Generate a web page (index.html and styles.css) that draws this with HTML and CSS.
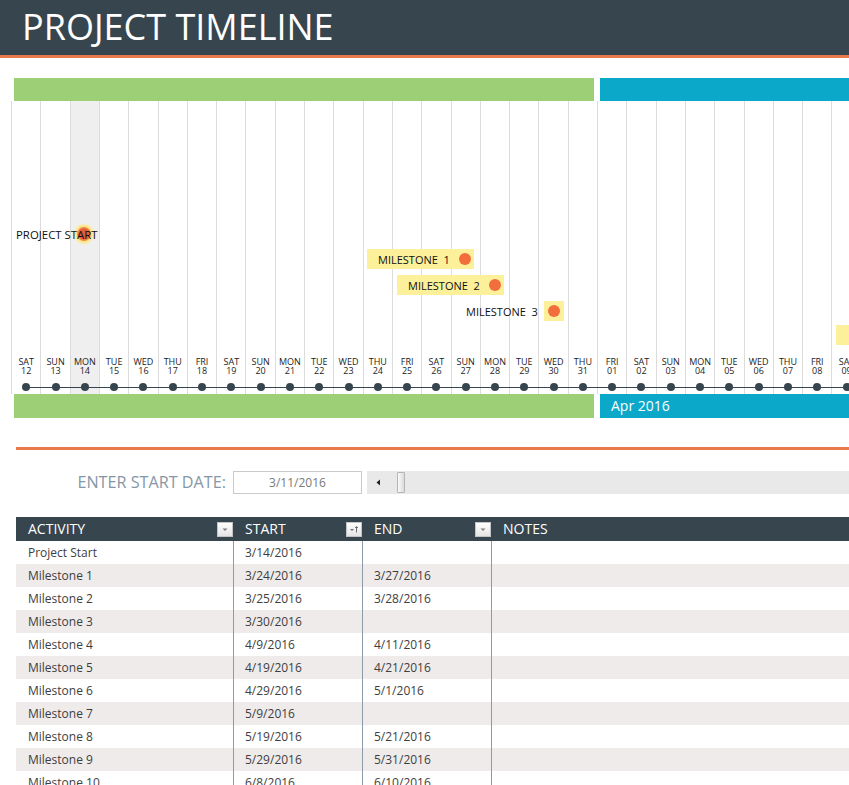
FILE: index.html
```html
<!DOCTYPE html>
<html lang="en">
<head>
<meta charset="utf-8">
<title>Project Timeline</title>
<link rel="stylesheet" href="styles.css">
</head>
<body>
<header class="title-bar"><h1 class="title">PROJECT TIMELINE</h1></header>

<section class="timeline">
  <div class="band band-top">
    <div class="seg seg-mar"></div>
    <div class="seg seg-apr"></div>
  </div>

  <div class="chart">
    <div class="days">
      <div class="day"><span class="dlabel">SAT<br>12</span><span class="dot"></span></div>
      <div class="day"><span class="dlabel">SUN<br>13</span><span class="dot"></span></div>
      <div class="day today"><span class="dlabel">MON<br>14</span><span class="dot"></span></div>
      <div class="day"><span class="dlabel">TUE<br>15</span><span class="dot"></span></div>
      <div class="day"><span class="dlabel">WED<br>16</span><span class="dot"></span></div>
      <div class="day"><span class="dlabel">THU<br>17</span><span class="dot"></span></div>
      <div class="day"><span class="dlabel">FRI<br>18</span><span class="dot"></span></div>
      <div class="day"><span class="dlabel">SAT<br>19</span><span class="dot"></span></div>
      <div class="day"><span class="dlabel">SUN<br>20</span><span class="dot"></span></div>
      <div class="day"><span class="dlabel">MON<br>21</span><span class="dot"></span></div>
      <div class="day"><span class="dlabel">TUE<br>22</span><span class="dot"></span></div>
      <div class="day"><span class="dlabel">WED<br>23</span><span class="dot"></span></div>
      <div class="day"><span class="dlabel">THU<br>24</span><span class="dot"></span></div>
      <div class="day"><span class="dlabel">FRI<br>25</span><span class="dot"></span></div>
      <div class="day"><span class="dlabel">SAT<br>26</span><span class="dot"></span></div>
      <div class="day"><span class="dlabel">SUN<br>27</span><span class="dot"></span></div>
      <div class="day"><span class="dlabel">MON<br>28</span><span class="dot"></span></div>
      <div class="day"><span class="dlabel">TUE<br>29</span><span class="dot"></span></div>
      <div class="day"><span class="dlabel">WED<br>30</span><span class="dot"></span></div>
      <div class="day"><span class="dlabel">THU<br>31</span><span class="dot"></span></div>
      <div class="day"><span class="dlabel">FRI<br>01</span><span class="dot"></span></div>
      <div class="day"><span class="dlabel">SAT<br>02</span><span class="dot"></span></div>
      <div class="day"><span class="dlabel">SUN<br>03</span><span class="dot"></span></div>
      <div class="day"><span class="dlabel">MON<br>04</span><span class="dot"></span></div>
      <div class="day"><span class="dlabel">TUE<br>05</span><span class="dot"></span></div>
      <div class="day"><span class="dlabel">WED<br>06</span><span class="dot"></span></div>
      <div class="day"><span class="dlabel">THU<br>07</span><span class="dot"></span></div>
      <div class="day"><span class="dlabel">FRI<br>08</span><span class="dot"></span></div>
      <div class="day"><span class="dlabel">SAT<br>09</span><span class="dot"></span></div>
    </div>

    <div class="marker m-start"><span class="halo"></span><span class="mlabel">PROJECT START</span></div>
    <div class="marker mbox m1"><span class="mlabel">MILESTONE  1</span><span class="mdot"></span></div>
    <div class="marker mbox m2"><span class="mlabel">MILESTONE  2</span><span class="mdot"></span></div>
    <div class="marker m3"><span class="mlabel">MILESTONE  3</span><span class="dotbox"><span class="mdot"></span></span></div>
    <div class="marker m4"></div>
  </div>

  <div class="band band-bottom">
    <div class="seg seg-mar"></div>
    <div class="seg seg-apr">Apr 2016</div>
  </div>
</section>

<div class="divider"></div>

<div class="start-row">
  <label class="start-label" for="start-date">ENTER START DATE:</label>
  <div class="date-input" id="start-date">3/11/2016</div>
  <div class="scrollbar">
    <svg class="sb-arrow" width="5" height="7" viewBox="0 0 5 7"><path d="M4 0.5 L0.5 3.5 L4 6.5 Z" fill="#222"/></svg>
    <span class="sb-thumb"></span>
  </div>
</div>

<div class="table">
  <div class="trow thead">
    <div class="cell">ACTIVITY<span class="fbtn"><svg width="14" height="13" viewBox="0 0 14 13"><path d="M4.5 5.5h5l-2.5 2.5z" fill="#808080"/></svg></span></div>
    <div class="cell">START<span class="fbtn"><svg width="14" height="13" viewBox="0 0 14 13"><path d="M3 6h4l-2 2z" fill="#707070"/><path d="M9.5 3.5v6M8 5l1.5-1.5L11 5" stroke="#707070" stroke-width="1" fill="none"/></svg></span></div>
    <div class="cell">END<span class="fbtn"><svg width="14" height="13" viewBox="0 0 14 13"><path d="M4.5 5.5h5l-2.5 2.5z" fill="#808080"/></svg></span></div>
    <div class="cell">NOTES</div>
  </div>
  <div class="trow"><div class="cell">Project Start</div><div class="cell">3/14/2016</div><div class="cell"></div><div class="cell"></div></div>
  <div class="trow"><div class="cell">Milestone 1</div><div class="cell">3/24/2016</div><div class="cell">3/27/2016</div><div class="cell"></div></div>
  <div class="trow"><div class="cell">Milestone 2</div><div class="cell">3/25/2016</div><div class="cell">3/28/2016</div><div class="cell"></div></div>
  <div class="trow"><div class="cell">Milestone 3</div><div class="cell">3/30/2016</div><div class="cell"></div><div class="cell"></div></div>
  <div class="trow"><div class="cell">Milestone 4</div><div class="cell">4/9/2016</div><div class="cell">4/11/2016</div><div class="cell"></div></div>
  <div class="trow"><div class="cell">Milestone 5</div><div class="cell">4/19/2016</div><div class="cell">4/21/2016</div><div class="cell"></div></div>
  <div class="trow"><div class="cell">Milestone 6</div><div class="cell">4/29/2016</div><div class="cell">5/1/2016</div><div class="cell"></div></div>
  <div class="trow"><div class="cell">Milestone 7</div><div class="cell">5/9/2016</div><div class="cell"></div><div class="cell"></div></div>
  <div class="trow"><div class="cell">Milestone 8</div><div class="cell">5/19/2016</div><div class="cell">5/21/2016</div><div class="cell"></div></div>
  <div class="trow"><div class="cell">Milestone 9</div><div class="cell">5/29/2016</div><div class="cell">5/31/2016</div><div class="cell"></div></div>
  <div class="trow"><div class="cell">Milestone 10</div><div class="cell">6/8/2016</div><div class="cell">6/10/2016</div><div class="cell"></div></div>
</div>
</body>
</html>
```

FILE: styles.css
```css
* { box-sizing: border-box; }

html, body {
  margin: 0;
  padding: 0;
  overflow: hidden;
}

body {
  width: 849px;
  height: 785px;
  background: #ffffff;
  font-family: "Open Sans", "Noto Sans", "DejaVu Sans", sans-serif;
  color: #333;
}

/* ---------- title ---------- */
.title-bar {
  height: 58px;
  background: #37454e;
  border-bottom: 3px solid #e9784a;
  display: flex;
  align-items: center;
  padding-left: 22px;
}

.title {
  margin: 0;
  font-size: 36px;
  font-weight: 400;
  line-height: 1;
  color: #ffffff;
  padding-bottom: 2px;
}

/* ---------- timeline ---------- */
.band {
  display: flex;
  gap: 6px;
  padding-left: 14px;
}

.band-top {
  margin-top: 20px;
  height: 23px;
}

.band-bottom {
  height: 24px;
}

.seg-mar {
  flex: 0 0 580px;
  background: #9dd076;
}

.seg-apr {
  flex: 1;
  background: #0ca8c9;
  color: #ffffff;
  font-size: 14px;
  line-height: 24px;
  padding-left: 11px;
}

.chart {
  position: relative;
  height: 293px;
}

.days {
  display: flex;
  height: 100%;
  padding-left: 11.1px;
}

.day {
  flex: 0 0 29.3px;
  position: relative;
  display: flex;
  flex-direction: column;
  align-items: center;
  justify-content: flex-end;
  border-left: 1px solid #dcdcdc;
  color: #1c1c1c;
}

.day.today {
  background: #efefef;
}

.day::after {
  content: "";
  position: absolute;
  left: -1px;
  right: 0;
  bottom: 6px;
  height: 1px;
  background: #37454e;
}

.day:first-child::after {
  left: 50%;
}

.dlabel {
  font-size: 9px;
  line-height: 9.6px;
  text-align: center;
  white-space: nowrap;
}

.dot {
  position: relative;
  z-index: 1;
  width: 8px;
  height: 8px;
  border-radius: 50%;
  background: #37454e;
  margin-top: 7px;
  margin-bottom: 3px;
}

/* markers on the chart canvas */
.marker {
  position: absolute;
  display: flex;
  align-items: center;
  font-size: 11px;
  color: #111111;
  white-space: pre;
  z-index: 2;
}

.mlabel {
  position: relative;
  z-index: 1;
}

.m-start {
  left: 16px;
  top: 125px;
  height: 16px;
  font-size: 11.4px;
}

.halo {
  position: absolute;
  left: 57px;
  top: -3px;
  width: 22px;
  height: 22px;
  border-radius: 50%;
  background: radial-gradient(circle, #e2573a 0, #e65e3b 5px, #f3934e 6.5px, rgba(253, 226, 122, 0.95) 7.5px, rgba(254, 236, 150, 0.6) 9.5px, rgba(255, 245, 200, 0) 11px);
}

.mbox {
  height: 20px;
  background: #fcf09a;
  padding: 0 3px 0 11px;
  gap: 9px;
}

.m1 { left: 367px; top: 148px; }
.m2 { left: 397px; top: 174px; }

.m3 {
  left: 466px;
  top: 200px;
  height: 20px;
  gap: 6px;
}

.dotbox {
  width: 20px;
  height: 20px;
  background: #fcf09a;
  display: flex;
  align-items: center;
  justify-content: center;
}

.m4 {
  left: 836px;
  top: 224px;
  width: 40px;
  height: 20px;
  background: #fcf09a;
}

.mdot {
  width: 12px;
  height: 12px;
  border-radius: 50%;
  background: #f26e3c;
}

/* ---------- divider ---------- */
.divider {
  margin: 29px 0 0 16px;
  height: 3px;
  background: #e9784a;
}

/* ---------- start date row ---------- */
.start-row {
  display: flex;
  height: 23px;
  margin-top: 21px;
  padding-left: 16px;
}

.start-label {
  flex: 0 0 217px;
  text-align: right;
  padding-right: 7px;
  font-size: 16.2px;
  line-height: 23px;
  color: #8597a6;
  white-space: nowrap;
}

.date-input {
  flex: 0 0 129px;
  border: 1px solid #cacaca;
  text-align: center;
  font-size: 12px;
  line-height: 21px;
  color: #7a7a7a;
}

.scrollbar {
  flex: 1;
  margin-left: 5px;
  background: #e9e9e9;
  display: flex;
  align-items: center;
  padding-left: 9px;
}

.sb-arrow {
  display: block;
}

.sb-thumb {
  margin-left: 16px;
  width: 8px;
  height: 21px;
  border: 1px solid #b5b5b5;
  border-radius: 1px;
  background: linear-gradient(to right, #fafafa, #dcdcdc);
}

/* ---------- table ---------- */
.table {
  margin: 23px 0 0 16px;
}

.trow {
  display: grid;
  grid-template-columns: 217px 129px 129px 1fr;
  height: 23px;
  font-size: 12px;
  line-height: 23px;
  color: #3e3e3e;
}

.trow:nth-child(odd) {
  background: #efebeb;
}

.trow .cell {
  padding-left: 12px;
  white-space: nowrap;
}

.trow .cell:nth-child(n+2) {
  border-left: 1px solid #8d9ba7;
  padding-left: 11px;
}

.table .thead {
  height: 24px;
  background: #37454e;
  color: #ffffff;
  font-size: 14px;
  line-height: 24px;
}

.thead .cell,
.thead .cell:nth-child(n+2) {
  border-left: 0;
  padding-left: 12px;
  display: flex;
  align-items: center;
  justify-content: space-between;
}

.fbtn {
  width: 16px;
  height: 15px;
  border: 1px solid #c4c4c4;
  background: linear-gradient(#ffffff, #e4e4e4);
  display: flex;
  align-items: center;
  justify-content: center;
}

.fbtn svg {
  display: block;
}
```
